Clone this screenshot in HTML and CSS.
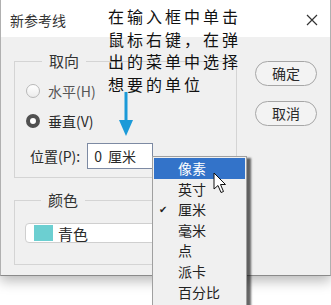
FILE: index.html
```html
<!DOCTYPE html>
<html lang="zh">
<head>
<meta charset="utf-8">
<link rel="stylesheet" href="styles.css">
</head>
<body>
<div class="dialog">
  <div class="titlebar">
    <span class="title">新参考线</span>
    <svg class="close" width="12" height="12" viewBox="0 0 12 12"><path d="M1 1L11 11M11 1L1 11" stroke="#333" stroke-width="1.2" fill="none"/></svg>
  </div>
  <div class="body">
    <div class="left">
      <div class="group g1">
        <div class="group-title">取向</div>
        <div class="radio-row r1"><span class="radio"></span><span class="lbl dim">水平(H)</span></div>
        <div class="radio-row r2"><span class="radio on"></span><span class="lbl">垂直(V)</span></div>
        <div class="pos-row"><span class="lbl">位置(P):</span><span class="input"><span class="num">0</span>厘米</span></div>
      </div>
      <div class="group g2">
        <div class="group-title">颜色</div>
        <div class="select"><span class="swatch"></span><span>青色</span></div>
      </div>
    </div>
    <div class="right">
      <div class="btn">确定</div>
      <div class="btn">取消</div>
    </div>
  </div>
</div>

<div class="note">在输入框中单击<br>鼠标右键，在弹<br>出的菜单中选择<br>想要的单位</div>
<svg class="arrow" width="16" height="46" viewBox="0 0 16 46"><rect x="6.5" y="0" width="3" height="30" fill="#1b9ad8"/><path d="M1 28H15L8 44Z" fill="#1b9ad8"/></svg>

<div class="menu">
  <div class="item hl">像素</div>
  <div class="item">英寸</div>
  <div class="item"><span class="check">✔</span>厘米</div>
  <div class="item">毫米</div>
  <div class="item">点</div>
  <div class="item">派卡</div>
  <div class="item">百分比</div>
</div>
<svg class="cursor" width="14" height="22" viewBox="0 0 14 22"><path d="M1 1V17L5 13.5L8 20.5L10.5 19.5L7.5 12.5H12.5Z" fill="#fff" stroke="#111" stroke-width="1" stroke-linejoin="round"/></svg>
</body>
</html>
```

FILE: styles.css
```css
html, body {
  margin: 0;
  padding: 0;
  background: #fff;
}
body {
  width: 331px;
  height: 305px;
  overflow: hidden;
  position: relative;
  font-family: "Noto Sans CJK SC", "Noto Sans", sans-serif;
  color: #2a2a2a;
  font-size: 14px;
}
.dialog {
  width: 329px;
  height: 275px;
  border: 1px solid #b0b0b0;
  border-bottom-color: #8a8a8a;
  border-top: none;
  background: #f0f0f0;
  box-shadow: 0 5px 12px rgba(0, 0, 0, 0.28);
  display: flex;
  flex-direction: column;
}
.titlebar {
  height: 35px;
  background: #fff;
  display: flex;
  align-items: center;
  justify-content: space-between;
  padding: 2px 12px 0 9px;
}
.title {
  font-size: 14px;
  color: #333;
}
.body {
  flex: 1;
  display: flex;
  padding: 24px 0 0 13px;
  gap: 18px;
}
.left {
  width: 223px;
  display: flex;
  flex-direction: column;
  gap: 22px;
}
.group {
  border: 1px solid #d4d4d4;
  box-sizing: border-box;
}
.group-title {
  width: fit-content;
  margin: -12px 0 0 16px;
  padding: 0 7px;
  background: #f0f0f0;
  font-size: 15px;
  line-height: 22px;
  color: #333;
}
.g1 {
  height: 117px;
  padding-left: 11px;
}
.g2 {
  height: 65px;
  padding-left: 10px;
}
.radio-row {
  display: flex;
  align-items: center;
  gap: 8px;
  height: 30px;
  font-size: 14px;
}
.r1 { margin-top: 4px; }
.radio {
  width: 14px;
  height: 14px;
  box-sizing: border-box;
  border-radius: 50%;
  border: 1px solid #b8b8b8;
  background: linear-gradient(#fff, #ececec);
}
.radio.on {
  border: 4px solid #505050;
  background: #fff;
}
.lbl.dim { color: #555; }
.pos-row {
  display: flex;
  align-items: center;
  gap: 7px;
  margin-top: 7px;
  padding-left: 4px;
}
.input {
  width: 66px;
  height: 26px;
  box-sizing: border-box;
  border: 1px solid #7d8aa3;
  background: #fff;
  padding-left: 6px;
  line-height: 24px;
}
.num {
  margin-right: 6px;
}
.select {
  margin-top: 12px;
  width: 200px;
  height: 18px;
  border: 1px solid #cfcfcf;
  border-radius: 4px;
  background: #fff;
  display: flex;
  align-items: center;
  gap: 5px;
  padding-left: 8px;
  font-size: 15px;
}
.swatch {
  width: 19px;
  height: 16px;
  background: #6ccfd1;
}
.right {
  display: flex;
  flex-direction: column;
  gap: 15px;
}
.btn {
  width: 62px;
  height: 25px;
  box-sizing: border-box;
  border: 1px solid #a6a6a6;
  border-radius: 13px;
  background: #f3f3f3;
  text-align: center;
  line-height: 23px;
  font-size: 14px;
}
.note {
  position: absolute;
  left: 108px;
  top: 5px;
  font-size: 16px;
  line-height: 22.6px;
  letter-spacing: 3px;
  color: #111;
}
.arrow {
  position: absolute;
  left: 118px;
  top: 92px;
}
.menu {
  position: absolute;
  left: 152px;
  top: 156px;
  width: 95px;
  height: 160px;
  box-sizing: border-box;
  border: 1px solid #a0a0a0;
  background: #f0f0f0;
  box-shadow: 4px 2px 2px rgba(0, 0, 0, 0.6);
  padding: 1px 1px 0;
}
.item {
  height: 20.6px;
  line-height: 20.6px;
  padding-left: 24px;
  position: relative;
  font-size: 14px;
  color: #222;
}
.item.hl {
  background: #3373c9;
  color: #fff;
}
.check {
  position: absolute;
  left: 5px;
  font-size: 10px;
  color: #222;
}
.cursor {
  position: absolute;
  left: 213px;
  top: 172px;
}
```
